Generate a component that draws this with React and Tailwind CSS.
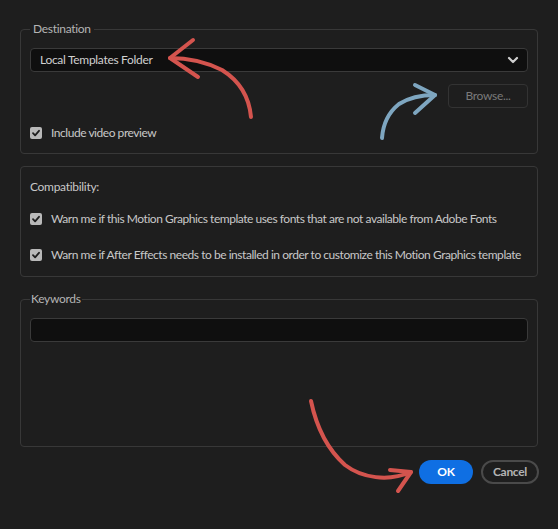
import React from "react";

function Check() {
  return (
    <span className="flex h-[12px] w-[12px] shrink-0 items-center justify-center rounded-[2px] bg-[#b9b9b9]">
      <svg width="10" height="10" viewBox="0 0 10 10" fill="none">
        <path d="M2 5.2 L4.1 7.3 L8 2.8" stroke="#1e1e1e" strokeWidth="1.8" strokeLinecap="round" strokeLinejoin="round" />
      </svg>
    </span>
  );
}

function CheckRow({ children, className = "" }) {
  return (
    <div className={"flex items-center gap-[9px] " + className}>
      <Check />
      <span className="whitespace-nowrap text-[12px] leading-[16px] tracking-[-0.46px] text-[#c8c8c8]">{children}</span>
    </div>
  );
}

export default function App() {
  return (
    <div
      className="relative h-[529px] w-[558px] overflow-hidden bg-[#1e1e1e] px-[20px] pt-[21px] tracking-[-0.3px]"
      style={{ fontFamily: 'Lato, "Noto Sans", sans-serif' }}
    >
      {/* Destination */}
      <fieldset className="w-[518px] rounded-[4px] border border-[#383838] px-[9px] pb-[12px]">
        <legend className="px-[3px] text-[12px] leading-[16px] text-[#b4b4b4]">Destination</legend>
        <div className="mt-[11px] flex h-[24px] items-center justify-between rounded-[4px] border border-[#3a3a3a] bg-[#0f0f0f] pl-[9px] pr-[8px]">
          <span className="whitespace-nowrap text-[12px] text-[#d0d0d0]">Local Templates Folder</span>
          <svg width="12" height="8" viewBox="0 0 12 8" fill="none">
            <path d="M2 2 L6 6 L10 2" stroke="#cfcfcf" strokeWidth="2.2" strokeLinecap="round" strokeLinejoin="round" />
          </svg>
        </div>
        <div className="mt-[12px] flex justify-end">
          <div className="flex h-[24px] w-[80px] items-center justify-center rounded-[4px] border border-[#333333] text-[12px] text-[#7a7a7a]">
            Browse...
          </div>
        </div>
        <CheckRow className="mt-[17px]">Include video preview</CheckRow>
      </fieldset>

      {/* Compatibility */}
      <div className="mt-[12px] flex h-[111px] w-[518px] flex-col rounded-[4px] border border-[#383838] px-[9px] pt-[12px]">
        <span className="text-[12px] leading-[16px] text-[#c8c8c8]">Compatibility:</span>
        <CheckRow className="mt-[16px]">
          Warn me if this Motion Graphics template uses fonts that are not available from Adobe Fonts
        </CheckRow>
        <CheckRow className="mt-[20px]">
          Warn me if After Effects needs to be installed in order to customize this Motion Graphics template
        </CheckRow>
      </div>

      {/* Keywords */}
      <fieldset className="mt-[14px] h-[156px] w-[518px] rounded-[4px] border border-[#383838] px-[9px]">
        <legend className="px-[1px] text-[12px] leading-[16px] text-[#b4b4b4]">Keywords</legend>
        <div className="mt-[11px] h-[24px] rounded-[4px] border border-[#3a3a3a] bg-[#0f0f0f]" />
      </fieldset>

      {/* Buttons */}
      <div className="-mr-[1px] mt-[13px] flex justify-end gap-[8px]">
        <div className="flex h-[24px] w-[54px] items-center justify-center rounded-full bg-[#0f6fe3] text-[12px] font-bold text-white">
          OK
        </div>
        <div className="flex h-[24px] w-[58px] items-center justify-center rounded-full border-2 border-[#4a4a4a] text-[12px] font-bold text-[#b4b4b4]">
          Cancel
        </div>
      </div>

      {/* Annotation arrows */}
      <svg className="pointer-events-none absolute left-0 top-0" width="558" height="529" viewBox="0 0 558 529" fill="none">
        <g stroke="#d4544e" strokeWidth="4" strokeLinecap="round" strokeLinejoin="round">
          <path d="M251 117 C249 95 238 80 222 70 C206 62 188 58 170 58" />
          <path d="M193 40 L170 58 L198 77" />
          <path d="M311 401 C316 425 326 448 345 465 C362 478 388 482 411 472" />
          <path d="M390 470 L411 472 L398 491" />
        </g>
        <g stroke="#7ea6c0" strokeWidth="4" strokeLinecap="round" strokeLinejoin="round">
          <path d="M382 138 C383 124 389 112 399 104 C410 97 422 95 435 95" />
          <path d="M415 85 L435 95 L415 113" />
        </g>
      </svg>
    </div>
  );
}
